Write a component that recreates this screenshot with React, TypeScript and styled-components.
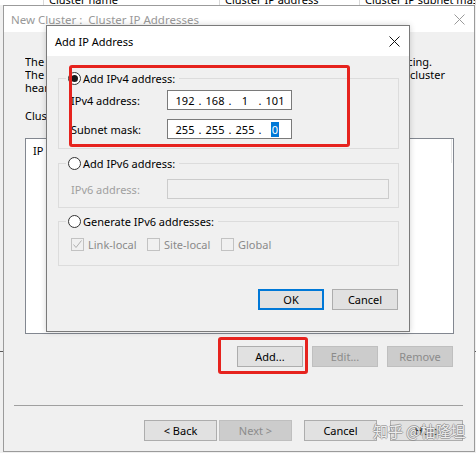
import React from "react";
import styled, { createGlobalStyle, css } from "styled-components";

const Global = createGlobalStyle`
  html, body { margin: 0; padding: 0; background: #f0f0f0; }
  body { font-family: "Noto Sans", "Segoe UI", sans-serif; font-size: 11px; color: #000; }
  * { box-sizing: border-box; }
`;

const Desktop = styled.div`
  position: relative;
  width: 476px;
  height: 453px;
  overflow: hidden;
  background: #f0f0f0;
`;

/* window behind everything (NLB manager) */
const BackWindow = styled.div`
  position: absolute;
  left: 0;
  top: -10px;
  right: 0;
  bottom: 0;
  display: flex;
  flex-direction: column;
`;
const BackHeader = styled.div`
  display: flex;
  height: 15px;
  flex: none;
  background: #fff;
`;
const BackCol = styled.div<{ $w?: number }>`
  flex: ${(p) => (p.$w ? "none" : "1")};
  width: ${(p) => (p.$w ? `${p.$w}px` : "auto")};
  border-right: 1px solid #d9d9d9;
  padding: 3px 0 0 5px;
  line-height: 13px;
  white-space: nowrap;
  overflow: hidden;
`;
const BackPane = styled.div`
  height: 347px;
  flex: none;
  border-bottom: 1px solid #5a5a5a;
`;

/* generic window chrome */
const Window = styled.div<{ $x: number; $y: number; $w: number; $h: number; $active?: boolean }>`
  position: absolute;
  left: ${(p) => p.$x}px;
  top: ${(p) => p.$y}px;
  width: ${(p) => p.$w}px;
  height: ${(p) => p.$h}px;
  display: flex;
  flex-direction: column;
  background: #f0f0f0;
  border: 1px solid ${(p) => (p.$active ? "#7a7a7a" : "#9b9b9b")};
  box-shadow: ${(p) => (p.$active ? "0 0 6px rgba(0,0,0,0.18)" : "none")};
`;
const TitleBar = styled.div<{ $h: number; $active?: boolean }>`
  height: ${(p) => p.$h}px;
  flex: none;
  display: flex;
  align-items: center;
  justify-content: space-between;
  background: #fff;
  color: ${(p) => (p.$active ? "#000" : "#999")};
  padding-left: ${(p) => (p.$active ? 8 : 7)}px;
  font-size: ${(p) => (p.$active ? 11 : 11.5)}px;
  white-space: pre;
`;
const CloseBox = styled.div`
  width: 30px;
  height: 100%;
  display: flex;
  align-items: center;
  justify-content: center;
`;

const CloseIcon = ({ color }: { color: string }) => (
  <svg width="11" height="11" viewBox="0 0 11 11">
    <path d="M0.5 0.5 L10.5 10.5 M10.5 0.5 L0.5 10.5" stroke={color} strokeWidth="1" fill="none" />
  </svg>
);

/* outer wizard */
const WizardBody = styled.div`
  flex: 1;
  display: flex;
  flex-direction: column;
  padding: 0 11px 0 10px;
`;
const WizardContent = styled.div`
  display: flex;
  flex-direction: column;
  padding: 23px 9px 0 11px;
`;
const Line = styled.div<{ $end?: number }>`
  display: flex;
  justify-content: space-between;
  line-height: 13px;
  white-space: nowrap;
  margin-right: ${(p) => p.$end ?? 0}px;
`;
const Lead = styled.span`
  flex: 1 1 auto;
  min-width: 0;
  overflow: hidden;
`;
const Tail = styled.span`
  flex: none;
`;
const Caption = styled.div`
  margin-top: 15px;
  line-height: 13px;
`;
const ListBox = styled.div`
  margin-top: 16px;
  height: 196px;
  background: #fff;
  border: 1px solid #828790;
`;
const ListHeader = styled.div`
  display: flex;
  height: 24px;
`;
const ListHead = styled.div<{ $w: number }>`
  width: ${(p) => p.$w}px;
  flex: none;
  padding-left: 7px;
  line-height: 24px;
  border-right: 1px solid #e5e5e5;
`;
const ButtonRow = styled.div`
  display: flex;
  justify-content: flex-end;
  gap: 9px;
  margin-top: 12px;
  padding-right: 1px;
`;
const Footer = styled.div`
  margin-top: auto;
  border-top: 1px solid #a0a0a0;
  padding: 14px 0 10px;
  display: flex;
  justify-content: flex-end;
`;

const Button = styled.button<{ $w: number; $disabled?: boolean; $default?: boolean; $gap?: number }>`
  width: ${(p) => p.$w}px;
  height: 21px;
  margin: 0 0 0 ${(p) => p.$gap ?? 0}px;
  padding: 0;
  font: inherit;
  font-size: 11px;
  background: #e1e1e1;
  color: #000;
  border: 1px solid #adadad;
  ${(p) =>
    p.$disabled &&
    css`
      background: #cccccc;
      border-color: #bfbfbf;
      color: #8b8b8b;
    `}
  ${(p) =>
    p.$default &&
    css`
      border-color: #0078d7;
      box-shadow: inset 0 0 0 1px #0078d7;
    `}
`;

/* inner dialog */
const DialogBody = styled.div`
  flex: 1;
  display: flex;
  flex-direction: column;
  padding: 16px 10px 21px 11px;
`;
const Group = styled.fieldset<{ $pt: number; $pb: number; $mt?: number }>`
  margin: ${(p) => p.$mt ?? 0}px 0 0 0;
  padding: ${(p) => p.$pt}px 0 ${(p) => p.$pb}px 0;
  border: 1px solid #dcdcdc;
  min-width: 0;
`;
const GroupInner = styled.div`
  padding-left: 12px;
`;
const Legend = styled.legend`
  display: flex;
  align-items: center;
  gap: 2px;
  height: 13px;
  line-height: 13px;
  margin-left: 7px;
  padding: 0 4px 0 2px;
`;
const Radio = styled.span<{ $on?: boolean }>`
  width: 13px;
  height: 13px;
  border-radius: 50%;
  border: 1px solid #333;
  background: #fff;
  display: flex;
  align-items: center;
  justify-content: center;
  &::after {
    content: "";
    width: 7px;
    height: 7px;
    border-radius: 50%;
    background: #1a1a1a;
    display: ${(p) => (p.$on ? "block" : "none")};
  }
`;
const Fields = styled.div`
  display: flex;
  flex-direction: column;
  gap: 9px;
`;
const FieldRow = styled.div`
  display: grid;
  grid-template-columns: 96px auto;
  align-items: center;
`;
const Label = styled.span<{ $disabled?: boolean }>`
  color: ${(p) => (p.$disabled ? "#a0a0a0" : "#000")};
  white-space: nowrap;
`;
const TextBox = styled.div<{ $w: number; $disabled?: boolean }>`
  width: ${(p) => p.$w}px;
  height: 20px;
  border: 1px solid ${(p) => (p.$disabled ? "#cccccc" : "#7a7a7a")};
  background: ${(p) => (p.$disabled ? "#f0f0f0" : "#fff")};
  display: flex;
  align-items: center;
  padding-left: 5px;
`;
const Octet = styled.span`
  width: 24px;
  text-align: center;
`;
const Dot = styled.span`
  width: 6px;
  text-align: center;
`;
const Selected = styled.span`
  background: #0078d7;
  color: #fff;
  padding: 0 1px;
  line-height: 14px;
`;
const CheckRow = styled.div`
  display: grid;
  grid-template-columns: 76px 74px auto;
  align-items: center;
  height: 13px;
`;
const CheckItem = styled.span`
  display: flex;
  align-items: center;
  gap: 4px;
  color: #8a8a8a;
  line-height: 13px;
`;
const CheckBox = styled.span`
  width: 13px;
  height: 13px;
  border: 1px solid #c2c2c2;
  display: flex;
  align-items: center;
  justify-content: center;
`;
const DialogButtons = styled.div`
  display: flex;
  justify-content: flex-end;
  gap: 8px;
  margin-top: 23px;
  padding-right: 1px;
`;

/* annotations over the screenshot */
const Mark = styled.div<{ $x: number; $y: number; $w: number; $h: number }>`
  position: absolute;
  left: ${(p) => p.$x}px;
  top: ${(p) => p.$y}px;
  width: ${(p) => p.$w}px;
  height: ${(p) => p.$h}px;
  border: 3px solid #e6231e;
  border-radius: 3px;
  pointer-events: none;
`;
const Watermark = styled.div`
  position: absolute;
  left: 373px;
  top: 421px;
  font-family: "Noto Sans CJK SC", "Noto Sans", sans-serif;
  font-size: 15px;
  line-height: 20px;
  white-space: nowrap;
  color: rgba(255, 255, 255, 0.85);
  text-shadow: -1px 0 rgba(130, 130, 130, 0.6), 1px 0 rgba(130, 130, 130, 0.6),
    0 -1px rgba(130, 130, 130, 0.6), 0 1px rgba(130, 130, 130, 0.6);
  pointer-events: none;
`;

const IpField = ({ parts, selectLast }: { parts: string[]; selectLast?: boolean }) => (
  <TextBox $w={125}>
    {parts.map((p, i) => (
      <React.Fragment key={i}>
        <Octet>{selectLast && i === parts.length - 1 ? <Selected>{p}</Selected> : p}</Octet>
        {i < parts.length - 1 && <Dot>.</Dot>}
      </React.Fragment>
    ))}
  </TextBox>
);

const Check = ({ on, label }: { on?: boolean; label: string }) => (
  <CheckItem>
    <CheckBox>
      {on && (
        <svg width="11" height="11" viewBox="0 0 11 11">
          <path d="M1.5 5.5 L4 8.5 L9.5 1.5" stroke="#b0b0b0" strokeWidth="1" fill="none" />
        </svg>
      )}
    </CheckBox>
    {label}
  </CheckItem>
);

export default function App() {
  return (
    <Desktop>
      <Global />
      <BackWindow>
        <BackHeader>
          <BackCol $w={44} />
          <BackCol $w={176}>Cluster name</BackCol>
          <BackCol $w={140}>Cluster IP address</BackCol>
          <BackCol>Cluster IP subnet mask</BackCol>
        </BackHeader>
        <BackPane />
      </BackWindow>

      <Window $x={3} $y={5} $w={472} $h={447}>
        <TitleBar $h={26}>
          <span>{"New Cluster :  Cluster IP Addresses"}</span>
          <CloseBox>
            <CloseIcon color="#9a9a9a" />
          </CloseBox>
        </TitleBar>
        <WizardBody>
          <WizardContent>
            <Line $end={22}>
              <Lead>The cluster IP addresses are used to address the entire cluster for load</Lead>
              <Tail>&nbsp;balancing.</Tail>
            </Line>
            <Line $end={9}>
              <Lead>The first IP address listed is considered the primary cluster IP address and used</Lead>
              <Tail>&nbsp;for cluster</Tail>
            </Line>
            <Line>
              <Lead>heartbeats.</Lead>
            </Line>
            <Caption>Cluster IP addresses:</Caption>
            <ListBox>
              <ListHeader>
                <ListHead $w={170}>IP address</ListHead>
                <ListHead $w={256}>Subnet mask</ListHead>
              </ListHeader>
            </ListBox>
            <ButtonRow>
              <Button $w={66}>Add...</Button>
              <Button $w={66} $disabled>Edit...</Button>
              <Button $w={66} $disabled>Remove</Button>
            </ButtonRow>
          </WizardContent>
          <Footer>
            <Button $w={73}>&lt; Back</Button>
            <Button $w={73} $gap={2} $disabled>Next &gt;</Button>
            <Button $w={73} $gap={12}>Cancel</Button>
            <Button $w={73} $gap={13}>Help</Button>
          </Footer>
        </WizardBody>
      </Window>

      <Window $x={46} $y={25} $w={364} $h={307} $active>
        <TitleBar $h={30} $active>
          <span>Add IP Address</span>
          <CloseBox>
            <CloseIcon color="#111" />
          </CloseBox>
        </TitleBar>
        <DialogBody>
          <Group $pt={5} $pb={9}>
            <Legend>
              <Radio $on />
              Add IPv4 address:
            </Legend>
            <GroupInner>
              <Fields>
                <FieldRow>
                  <Label>IPv4 address:</Label>
                  <IpField parts={["192", "168", "1", "101"]} />
                </FieldRow>
                <FieldRow>
                  <Label>Subnet mask:</Label>
                  <IpField parts={["255", "255", "255", "0"]} selectLast />
                </FieldRow>
              </Fields>
            </GroupInner>
          </Group>
          <Group $pt={9} $pb={8} $mt={8}>
            <Legend>
              <Radio />
              Add IPv6 address:
            </Legend>
            <GroupInner>
              <FieldRow>
                <Label $disabled>IPv6 address:</Label>
                <TextBox $w={222} $disabled />
              </FieldRow>
            </GroupInner>
          </Group>
          <Group $pt={10} $pb={14} $mt={7}>
            <Legend>
              <Radio />
              Generate IPv6 addresses:
            </Legend>
            <GroupInner>
              <CheckRow>
                <Check on label="Link-local" />
                <Check label="Site-local" />
                <Check label="Global" />
              </CheckRow>
            </GroupInner>
          </Group>
          <DialogButtons>
            <Button $w={66} $default>OK</Button>
            <Button $w={66}>Cancel</Button>
          </DialogButtons>
        </DialogBody>
      </Window>

      <Mark $x={69} $y={65} $w={281} $h={82} />
      <Mark $x={218} $y={337} $w={90} $h={37} />
      <Watermark>知乎 @柚隆坦</Watermark>
    </Desktop>
  );
}
